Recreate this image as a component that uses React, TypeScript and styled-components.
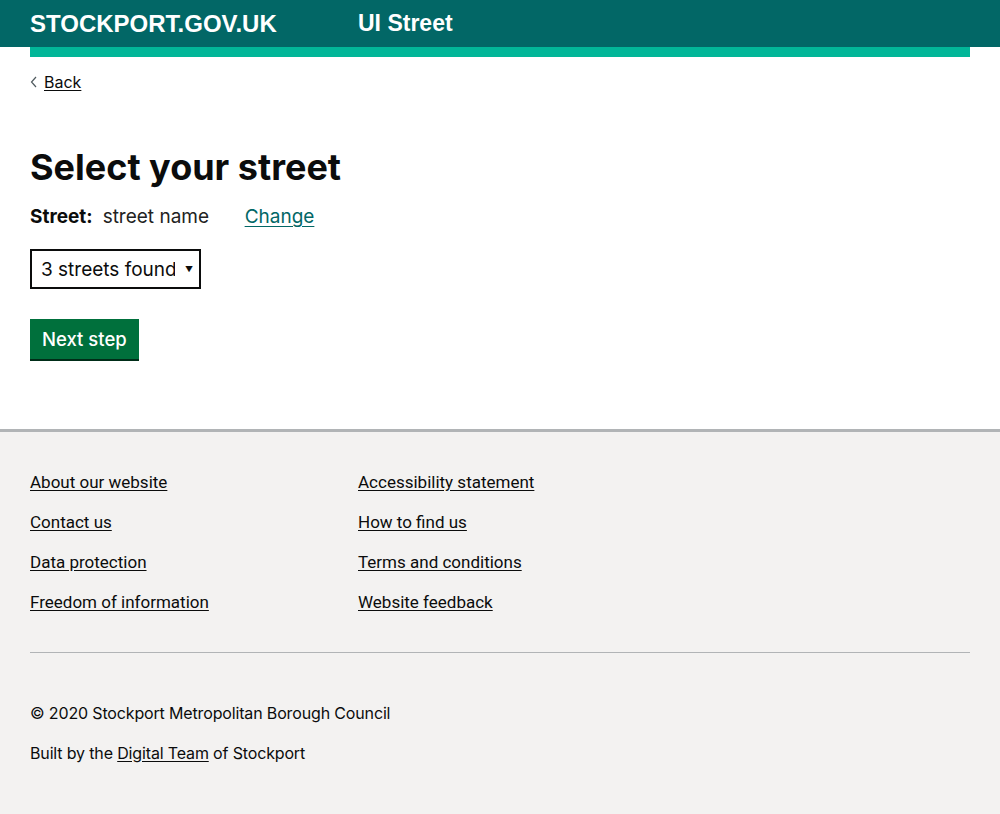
import react from "react";
import styled, { createGlobalStyle } from "styled-components";

/* ---- Data ---- */
const FOOTER_LEFT = ["About our website", "Contact us", "Data protection", "Freedom of information"];
const FOOTER_RIGHT = ["Accessibility statement", "How to find us", "Terms and conditions", "Website feedback"];

const Global = createGlobalStyle`
    html, body { margin: 0; padding: 0; background: #fff; }
    body {
        font-family: Inter, "Noto Sans", "Liberation Sans", sans-serif;
        color: #0b0c0c;
    }
    * { box-sizing: border-box; }
`;

export default function App ()
{
    const [street, setStreet] = react.useState("");

    return (
        <Page>
            <Global/>
            <Header>
                <HeaderInner>
                    <Brand>STOCKPORT.GOV.UK</Brand>
                    <Service>UI Street</Service>
                </HeaderInner>
            </Header>
            <Stripe/>

            <Main>
                <BackLink href="#">
                    <Chevron viewBox="0 0 8 12" aria-hidden="true">
                        <path d="M6 1 L1.5 6 L6 11" fill="none" stroke="#505a5f" strokeWidth="1.2"/>
                    </Chevron>
                    <BackText>Back</BackText>
                </BackLink>

                <Heading>Select your street</Heading>

                <Summary>
                    <SummaryKey>Street:</SummaryKey>
                    <SummaryValue>street name</SummaryValue>
                    <ChangeLink href="#">Change</ChangeLink>
                </Summary>

                <SelectWrap>
                    <Select value={street} onChange={e => setStreet(e.target.value)}>
                        <option value="">3 streets found</option>
                        <option value="a">Street A</option>
                        <option value="b">Street B</option>
                        <option value="c">Street C</option>
                    </Select>
                    <Caret>▼</Caret>
                </SelectWrap>

                <Button type="button">Next step</Button>
            </Main>

            <Footer>
                <FooterInner>
                    <LinkGrid>
                        <LinkCol>
                            {FOOTER_LEFT.map(l => <FooterLink key={l} href="#">{l}</FooterLink>)}
                        </LinkCol>
                        <LinkCol>
                            {FOOTER_RIGHT.map(l => <FooterLink key={l} href="#">{l}</FooterLink>)}
                        </LinkCol>
                    </LinkGrid>
                    <Rule/>
                    <Meta>
                        <MetaLine>© 2020 Stockport Metropolitan Borough Council</MetaLine>
                        <MetaLine>Built by the <MetaLink href="#">Digital Team</MetaLink> of Stockport</MetaLine>
                    </Meta>
                </FooterInner>
            </Footer>
        </Page>
    );
}

/* ---- Styled ---- */
const Page = styled.div`
    min-height: 814px;
    display: flex;
    flex-direction: column;
`;

const Header = styled.header`
    background: #026766;
    height: 47px;
`;
const HeaderInner = styled.div`
    display: flex;
    align-items: center;
    height: 100%;
    padding: 0 30px;
`;
const Brand = styled.span`
    font-family: "Liberation Sans", Arial, sans-serif;
    font-weight: bold;
    font-size: 24px;
    color: #fff;
    width: 328px;
`;
const Service = styled.span`
    font-family: "Liberation Sans", Arial, sans-serif;
    font-weight: bold;
    font-size: 23px;
    color: #fff;
`;
const Stripe = styled.div`
    height: 10px;
    margin: 0 30px;
    background: #02b698;
`;

const Main = styled.main`
    padding: 14px 30px 70px;
    display: flex;
    flex-direction: column;
    align-items: flex-start;
`;
const BackLink = styled.a`
    display: inline-flex;
    align-items: center;
    gap: 6px;
    color: #0b0c0c;
    text-decoration: none;
    font-size: 16px;
    line-height: 22px;
`;
const Chevron = styled.svg`
    width: 8px;
    height: 12px;
`;
const BackText = styled.span`
    text-decoration: underline;
    text-underline-offset: 2px;
`;
const Heading = styled.h1`
    font-size: 36px;
    font-weight: bold;
    margin: 50px 0 0;
    line-height: 48px;
    letter-spacing: 0;
`;
const Summary = styled.div`
    display: flex;
    align-items: baseline;
    margin-top: 14px;
    font-size: 19px;
    line-height: 24px;
`;
const SummaryKey = styled.span`
    font-weight: bold;
    margin-right: 10px;
`;
const SummaryValue = styled.span`
    width: 142px;
    color: #222;
`;
const ChangeLink = styled.a`
    color: #026766;
    text-decoration: underline;
    text-underline-offset: 3px;
`;
const SelectWrap = styled.div`
    position: relative;
    margin-top: 20px;
`;
const Select = styled.select`
    appearance: none;
    -webkit-appearance: none;
    height: 40px;
    width: 171px;
    border: 2px solid #0b0c0c;
    border-radius: 0;
    background: #fff;
    padding: 0 24px 0 9px;
    font-family: Inter, "Noto Sans", "Liberation Sans", sans-serif;
    font-size: 19px;
    color: #0b0c0c;
`;
const Caret = styled.span`
    position: absolute;
    right: 8px;
    top: 50%;
    transform: translateY(-55%);
    font-size: 8px;
    pointer-events: none;
`;
const Button = styled.button`
    margin-top: 30px;
    height: 40px;
    padding: 0 12px;
    background: #00703c;
    border: 0;
    border-radius: 0;
    box-shadow: 0 2px 0 #002d18;
    color: #fff;
    font-family: Inter, "Noto Sans", "Liberation Sans", sans-serif;
    font-size: 18.5px;
    font-weight: 500;
    cursor: pointer;
`;

const Footer = styled.footer`
    flex: 1;
    background: #f3f2f1;
    border-top: 3px solid #b1b4b6;
`;
const FooterInner = styled.div`
    padding: 39px 30px 40px;
`;
const LinkGrid = styled.div`
    display: grid;
    grid-template-columns: 328px 1fr;
`;
const LinkCol = styled.div`
    display: flex;
    flex-direction: column;
    gap: 18px;
`;
const FooterLink = styled.a`
    font-family: Roboto, "Liberation Sans", sans-serif;
    font-size: 17px;
    line-height: 22px;
    color: #0b0c0c;
    text-decoration: underline;
    text-underline-offset: 2px;
    align-self: flex-start;
`;
const Rule = styled.hr`
    border: 0;
    border-top: 1px solid #b1b4b6;
    margin: 39px 0 0;
`;
const Meta = styled.div`
    margin-top: 49px;
    display: flex;
    flex-direction: column;
    gap: 18px;
`;
const MetaLine = styled.p`
    margin: 0;
    font-size: 16px;
    line-height: 22px;
    letter-spacing: -0.15px;
    color: #0b0c0c;
`;
const MetaLink = styled.a`
    color: #0b0c0c;
    text-decoration: underline;
    text-underline-offset: 2px;
`;
